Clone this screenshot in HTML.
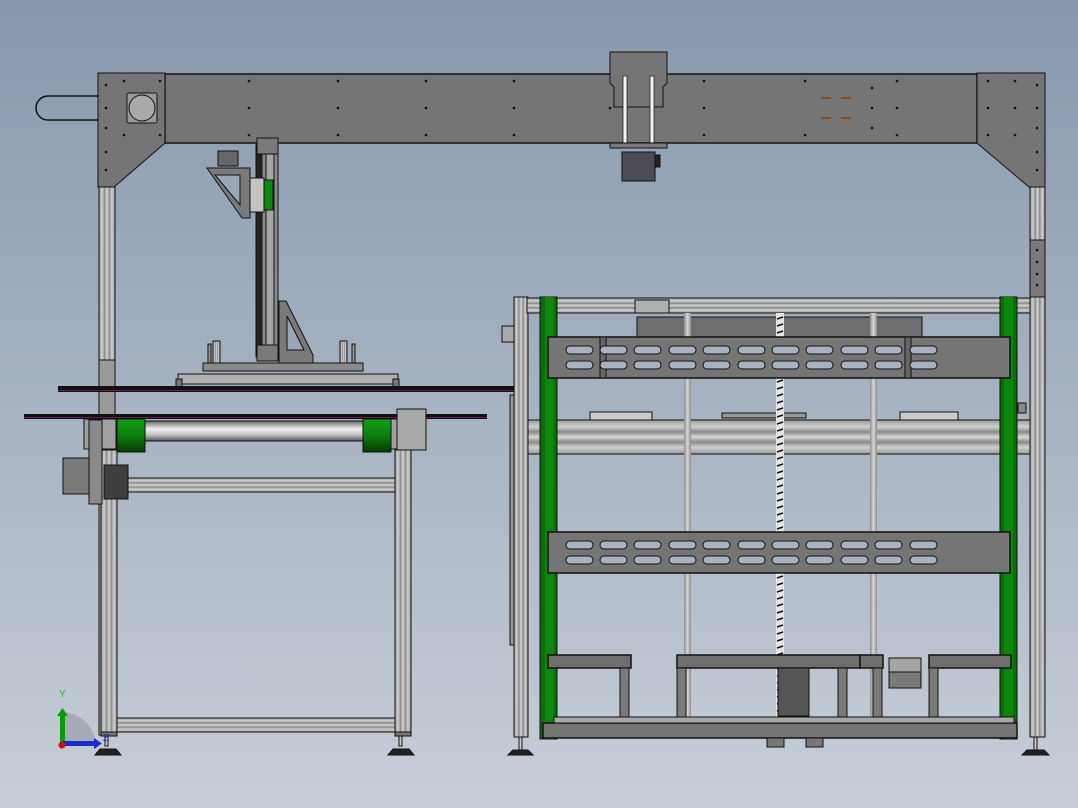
<!DOCTYPE html>
<html><head><meta charset="utf-8"><style>
html,body{margin:0;padding:0;width:1078px;height:808px;overflow:hidden}
svg{display:block}
</style></head><body>
<svg width="1078" height="808" viewBox="0 0 1078 808" xmlns="http://www.w3.org/2000/svg">
<defs>
<linearGradient id="bg" x1="0" y1="0" x2="0" y2="1">
<stop offset="0" stop-color="#8798ad"/><stop offset="1" stop-color="#c7ced8"/></linearGradient>
<linearGradient id="ext" x1="0" y1="0" x2="1" y2="0">
<stop offset="0" stop-color="#9a9a9a"/><stop offset=".2" stop-color="#d0d0d0"/><stop offset=".35" stop-color="#8a8a8a"/><stop offset=".5" stop-color="#d8d8d8"/><stop offset=".65" stop-color="#8a8a8a"/><stop offset=".8" stop-color="#d0d0d0"/><stop offset="1" stop-color="#9a9a9a"/></linearGradient>
<linearGradient id="exth" x1="0" y1="0" x2="0" y2="1">
<stop offset="0" stop-color="#9a9a9a"/><stop offset=".2" stop-color="#d0d0d0"/><stop offset=".35" stop-color="#8a8a8a"/><stop offset=".5" stop-color="#d8d8d8"/><stop offset=".65" stop-color="#8a8a8a"/><stop offset=".8" stop-color="#d0d0d0"/><stop offset="1" stop-color="#9a9a9a"/></linearGradient>
<linearGradient id="shaft" x1="0" y1="0" x2="0" y2="1">
<stop offset="0" stop-color="#6a6a6a"/><stop offset=".4" stop-color="#f0f0f0"/><stop offset=".7" stop-color="#c0c0c0"/><stop offset="1" stop-color="#555"/></linearGradient>
<linearGradient id="grn" x1="0" y1="0" x2="0" y2="1">
<stop offset="0" stop-color="#13a013"/><stop offset=".5" stop-color="#0b7f0b"/><stop offset="1" stop-color="#053c05"/></linearGradient>
<linearGradient id="rod" x1="0" y1="0" x2="1" y2="0">
<stop offset="0" stop-color="#8c8c8c"/><stop offset=".5" stop-color="#d8d8d8"/><stop offset="1" stop-color="#8c8c8c"/></linearGradient>
<pattern id="screw" width="8" height="7" patternUnits="userSpaceOnUse">
<rect width="8" height="7" fill="#e6e6e6"/><path d="M1 4 L7 2" stroke="#111" stroke-width="1.6"/></pattern>
</defs>
<rect width="1078" height="808" fill="url(#bg)"/>

<g stroke="#111" stroke-width="1">
<!-- handle -->
<path d="M98 96 H48 A12 12 0 0 0 48 120 H98" fill="none" stroke-width="1.5"/>

<!-- left columns -->
<rect x="99" y="187" width="16" height="548" fill="url(#ext)"/>
<rect x="1030" y="187" width="15" height="110" fill="url(#ext)"/>
<rect x="1030" y="240" width="15" height="57" fill="#7a7a7a"/>
<rect x="99" y="360" width="16" height="60" fill="#9a9a9a"/>

<!-- top beam -->
<rect x="165" y="74" width="812" height="69" fill="#757575" stroke-width="1.5"/>
<polygon points="98,73 165,73 165,143 114,187 98,187" fill="#757575"/>
<polygon points="977,73 1045,73 1045,187 1029,187 977,143" fill="#757575"/>
<rect x="127" y="93" width="30" height="30" rx="2" fill="#9a9a9a"/>
<circle cx="142" cy="108" r="13" fill="#a8a8a8"/>
<!-- center carriage -->
<path d="M610 52 H667 V83 L663 87 V107 H614 V87 L610 83 Z" fill="#757575"/>
<rect x="623" y="76" width="4" height="68" fill="#f2f2f2" stroke-width=".7"/>
<rect x="650" y="76" width="4" height="68" fill="#f2f2f2" stroke-width=".7"/>
<rect x="610" y="143" width="57" height="5" fill="#7a7a7a"/>
<rect x="622" y="152" width="33" height="29" fill="#4b4c55"/>
<rect x="655" y="155" width="5" height="12" fill="#222"/>
<!-- brown slots -->
<g fill="#8a4a18" stroke="none"><rect x="821" y="97" width="10" height="2"/><rect x="841" y="97" width="10" height="2"/><rect x="821" y="117" width="10" height="2"/><rect x="841" y="117" width="10" height="2"/></g>
</g>
<!-- beam holes -->
<g fill="#111">
<circle cx="704" cy="81" r="1.3"/><circle cx="704" cy="108" r="1.3"/><circle cx="704" cy="135" r="1.3"/>
<circle cx="805" cy="81" r="1.3"/><circle cx="805" cy="135" r="1.3"/>
<circle cx="897" cy="81" r="1.3"/><circle cx="897" cy="108" r="1.3"/><circle cx="897" cy="135" r="1.3"/>
<circle cx="872" cy="88" r="1.3"/><circle cx="872" cy="108" r="1.3"/><circle cx="872" cy="128" r="1.3"/>
<circle cx="988" cy="81" r="1.3"/><circle cx="1015" cy="81" r="1.3"/><circle cx="988" cy="108" r="1.3"/><circle cx="1015" cy="108" r="1.3"/><circle cx="988" cy="135" r="1.3"/><circle cx="1015" cy="135" r="1.3"/>
<circle cx="249" cy="81" r="1.3"/><circle cx="249" cy="108" r="1.3"/><circle cx="249" cy="135" r="1.3"/>
<circle cx="338" cy="81" r="1.3"/><circle cx="338" cy="108" r="1.3"/><circle cx="338" cy="135" r="1.3"/>
<circle cx="426" cy="81" r="1.3"/><circle cx="426" cy="108" r="1.3"/><circle cx="426" cy="135" r="1.3"/>
<circle cx="514" cy="81" r="1.3"/><circle cx="514" cy="108" r="1.3"/><circle cx="514" cy="135" r="1.3"/>
<circle cx="610" cy="108" r="1.3"/>
<circle cx="124" cy="81" r="1.3"/><circle cx="160" cy="81" r="1.3"/><circle cx="124" cy="135" r="1.3"/><circle cx="160" cy="135" r="1.3"/>
<circle cx="106" cy="85" r="1.3"/><circle cx="106" cy="108" r="1.3"/><circle cx="106" cy="128" r="1.3"/><circle cx="106" cy="152" r="1.3"/><circle cx="106" cy="170" r="1.3"/>
<circle cx="1037" cy="85" r="1.3"/><circle cx="1037" cy="108" r="1.3"/><circle cx="1037" cy="128" r="1.3"/><circle cx="1037" cy="152" r="1.3"/><circle cx="1037" cy="170" r="1.3"/>
<circle cx="1037" cy="250" r="1.3"/><circle cx="1037" cy="262" r="1.3"/><circle cx="1037" cy="274" r="1.3"/><circle cx="1037" cy="285" r="1.3"/>
</g>

<g stroke="#111" stroke-width="1">
<!-- Z axis module -->
<rect x="262" y="138" width="16" height="222" fill="#8a8a8a"/>
<rect x="266" y="150" width="8" height="202" fill="#a5a5a5"/>
<rect x="256" y="145" width="6" height="212" fill="#222"/>
<rect x="257" y="138" width="21" height="16" fill="#7a7a7a"/>
<rect x="257" y="345" width="21" height="16" fill="#7a7a7a"/>
<path d="M207 168 H250 V218 H242 Z" fill="#7a7a7a"/>
<path d="M215 175 H240 V205 Z" fill="#9aa7b7"/>
<rect x="218" y="151" width="20" height="15" fill="#676767"/>
<rect x="250" y="178" width="14" height="34" fill="#c3c3c3"/>
<rect x="264" y="180" width="9" height="30" fill="#0c8a0c"/>
<path d="M279 301 H286 L313 355 V363 H279 Z" fill="#7a7a7a"/>
<path d="M287 316 L304 350 H287 Z" fill="#9aa7b7"/>
<!-- gripper plate -->
<rect x="213" y="341" width="7" height="24" fill="url(#ext)"/>
<rect x="208" y="344" width="3" height="20" fill="#999"/>
<rect x="340" y="341" width="7" height="24" fill="url(#ext)"/>
<rect x="352" y="344" width="3" height="20" fill="#999"/>
<rect x="203" y="363" width="160" height="8" fill="#8a8a8a"/>
<rect x="178" y="374" width="220" height="10" fill="#b0b0b0"/>
<rect x="176" y="379" width="6" height="8" fill="#777"/>
<rect x="393" y="379" width="6" height="8" fill="#777"/>
</g>
<!-- belts -->
<rect x="58" y="386" width="458" height="6" fill="#111"/>
<rect x="58" y="390" width="458" height="1" fill="#6a1a5a"/>
<rect x="24" y="414" width="463" height="5" fill="#111"/>
<rect x="24" y="417" width="463" height="1" fill="#6a1a5a"/>

<g stroke="#111" stroke-width="1">
<!-- conveyor frame -->
<rect x="101" y="450" width="16" height="285" fill="url(#ext)"/>
<rect x="395" y="450" width="16" height="285" fill="url(#ext)"/>
<rect x="117" y="478" width="278" height="14" fill="url(#exth)"/>
<rect x="117" y="718" width="278" height="14" fill="url(#exth)"/>
<rect x="101" y="732" width="16" height="4" fill="#777"/>
<rect x="395" y="732" width="16" height="4" fill="#777"/>
<!-- rollers -->
<rect x="144" y="421" width="219" height="20" fill="url(#shaft)"/>
<rect x="117" y="419" width="28" height="33" fill="url(#grn)"/>
<rect x="363" y="419" width="28" height="33" fill="url(#grn)"/>
<rect x="84" y="419" width="32" height="30" fill="#a0a0a0"/>
<rect x="391" y="419" width="20" height="30" fill="#a0a0a0"/>
<rect x="397" y="409" width="29" height="41" fill="#a8a8a8"/>
<rect x="63" y="458" width="38" height="36" fill="#7a7a7a"/>
<rect x="89" y="420" width="13" height="84" fill="#8a8a8a"/>
<rect x="104" y="465" width="24" height="34" fill="#3f3f3f"/>
<!-- feet -->
<path d="M95 755 L100 749 H116 L121 755 Z" fill="#222"/>
<rect x="105" y="736" width="3" height="10" fill="#ccc"/>
<path d="M388 755 L393 749 H409 L414 755 Z" fill="#222"/>
<rect x="399" y="736" width="3" height="10" fill="#ccc"/>

<!-- right machine -->
<rect x="514" y="297" width="14" height="440" fill="url(#ext)"/>
<rect x="1030" y="297" width="15" height="440" fill="url(#ext)"/>
<rect x="502" y="326" width="12" height="16" fill="#aaa"/>
<rect x="510" y="395" width="4" height="250" fill="#999"/>
<rect x="527" y="298" width="503" height="15" fill="url(#exth)"/>
<rect x="635" y="300" width="34" height="13" fill="#b0b0b0"/>
<rect x="637" y="317" width="285" height="20" fill="#6e6e6e"/>
<rect x="528" y="420" width="502" height="34" fill="url(#exth)"/>
<rect x="590" y="412" width="62" height="8" fill="#ccc"/>
<rect x="722" y="413" width="84" height="5" fill="#999"/>
<rect x="900" y="412" width="58" height="8" fill="#ccc"/>
<rect x="1018" y="403" width="8" height="10" fill="#888"/>
<!-- rods -->
<rect x="684" y="313" width="7" height="410" fill="url(#rod)" stroke="none"/>
<rect x="870" y="313" width="7" height="410" fill="url(#rod)" stroke="none"/>
<rect x="776" y="313" width="8" height="410" fill="url(#screw)" stroke="none"/>
<!-- green columns -->
<rect x="540" y="297" width="17" height="442" fill="#0a6f0a"/>
<rect x="545" y="297" width="9" height="442" fill="#0c870c" stroke="none"/>
<rect x="1000" y="297" width="17" height="442" fill="#0a6f0a"/>
<rect x="1004" y="297" width="9" height="442" fill="#0c870c" stroke="none"/>
<!-- slot plates -->
<rect x="548" y="337" width="462" height="41" fill="#757575" stroke-width="1.5"/>
<rect x="548" y="532" width="462" height="41" fill="#757575" stroke-width="1.5"/>
<rect x="600" y="337" width="6" height="41" fill="#666"/>
<rect x="905" y="337" width="6" height="41" fill="#666"/>
<!-- stands -->
<rect x="548" y="655" width="83" height="13" fill="#6e6e6e" stroke-width="1.5"/>
<rect x="620" y="668" width="9" height="55" fill="#7a7a7a"/>
<rect x="677" y="655" width="183" height="13" fill="#6e6e6e" stroke-width="1.5"/>
<rect x="677" y="668" width="9" height="55" fill="#7a7a7a"/>
<rect x="838" y="668" width="9" height="55" fill="#7a7a7a"/>
<rect x="860" y="655" width="23" height="13" fill="#6e6e6e" stroke-width="1.5"/>
<rect x="873" y="668" width="9" height="55" fill="#7a7a7a"/>
<rect x="929" y="655" width="82" height="13" fill="#6e6e6e" stroke-width="1.5"/>
<rect x="929" y="668" width="9" height="55" fill="#7a7a7a"/>
<rect x="778" y="668" width="31" height="48" fill="#555"/>
<rect x="889" y="658" width="32" height="14" fill="#a5a5a5"/>
<rect x="889" y="672" width="32" height="16" fill="#7a7a7a"/>
<rect x="543" y="723" width="474" height="15" fill="#757575" stroke-width="1.5"/>
<rect x="554" y="717" width="460" height="6" fill="#a8a8a8"/>
<path d="M508 755 L513 750 H528 L533 755 Z" fill="#222"/>
<rect x="519" y="737" width="3" height="13" fill="#ccc"/>
<path d="M1022 755 L1027 750 H1044 L1049 755 Z" fill="#222"/>
<rect x="1034" y="737" width="3" height="13" fill="#ccc"/>
<rect x="767" y="738" width="17" height="9" fill="#777"/>
<rect x="806" y="738" width="17" height="9" fill="#777"/>
</g>
<!-- slots -->
<g fill="#a8b2c0" stroke="#111" stroke-width="1">
<g id="row">
<rect x="566" y="346" width="27" height="8" rx="4"/><rect x="600" y="346" width="27" height="8" rx="4"/><rect x="634" y="346" width="27" height="8" rx="4"/><rect x="669" y="346" width="27" height="8" rx="4"/><rect x="703" y="346" width="27" height="8" rx="4"/><rect x="738" y="346" width="27" height="8" rx="4"/><rect x="772" y="346" width="27" height="8" rx="4"/><rect x="806" y="346" width="27" height="8" rx="4"/><rect x="841" y="346" width="27" height="8" rx="4"/><rect x="875" y="346" width="27" height="8" rx="4"/><rect x="910" y="346" width="27" height="8" rx="4"/>
</g>
<use href="#row" y="15"/><use href="#row" y="195"/><use href="#row" y="210"/>
</g>

<!-- axes triad -->
<path d="M62 745 V712 A35 35 0 0 1 96 745 Z" fill="#9aa0a8" opacity=".7"/>
<rect x="60" y="716" width="5" height="28" fill="#0a9a0a"/>
<polygon points="57,716 68,716 62.5,708" fill="#0a9a0a"/>
<rect x="62" y="741" width="32" height="5" fill="#1a2ad0"/>
<polygon points="94,738 94,749 102,743.5" fill="#1a2ad0"/>
<circle cx="62" cy="745" r="3.5" fill="#d01010"/>
<text x="59" y="697" font-family="Liberation Sans, sans-serif" font-size="10" fill="#10c010">Y</text>
<text x="103" y="741" font-family="Liberation Sans, sans-serif" font-size="10" fill="#2030e0">Z</text>
</svg>
</body></html>
